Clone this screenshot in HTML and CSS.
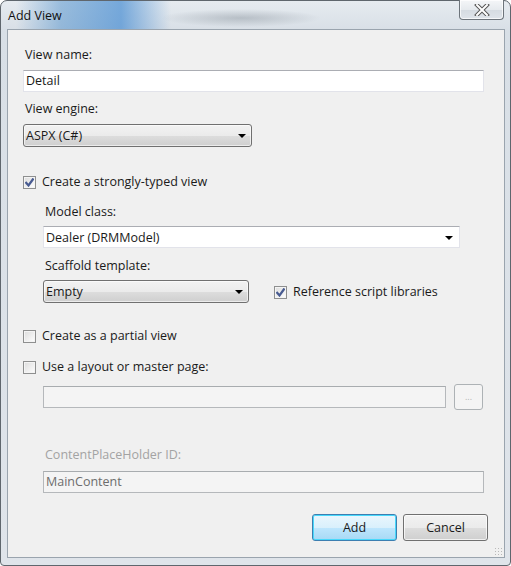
FILE: index.html
```html
<!DOCTYPE html>
<html lang="en">
<head>
    <meta charset="UTF-8">
    <title>Add View</title>
    <link rel="stylesheet" href="styles.css">
</head>
<body>
    <div class="window">
        <div class="titlebar">
            <div class="title">Add View</div>
            <div class="close-btn">
                <svg width="16" height="12" viewBox="0 0 16 12">
                    <path d="M3 1 L13 11 M13 1 L3 11" stroke="#555" stroke-width="4" stroke-linecap="square"/>
                    <path d="M3 1 L13 11 M13 1 L3 11" stroke="#fff" stroke-width="2" stroke-linecap="square"/>
                </svg>
            </div>
        </div>
        <div class="client">
            <div class="label l-name">View name:</div>
            <div class="textbox tb-name">Detail</div>

            <div class="label l-engine">View engine:</div>
            <div class="combo combo-engine">
                <span>ASPX (C#)</span>
                <span class="arrow"></span>
            </div>

            <div class="check-row cr-typed">
                <span class="check checked"></span>
                <span>Create a strongly-typed view</span>
            </div>

            <div class="indent">
                <div class="label l-model">Model class:</div>
                <div class="editcombo">
                    <span>Dealer (DRMModel)</span>
                    <span class="arrow"></span>
                </div>

                <div class="label l-scaffold">Scaffold template:</div>
                <div class="scaffold-row">
                    <div class="combo combo-scaffold">
                        <span>Empty</span>
                        <span class="arrow"></span>
                    </div>
                    <div class="check-row cr-ref">
                        <span class="check checked"></span>
                        <span>Reference script libraries</span>
                    </div>
                </div>
            </div>

            <div class="check-row cr-partial">
                <span class="check"></span>
                <span>Create as a partial view</span>
            </div>

            <div class="check-row cr-layout">
                <span class="check"></span>
                <span>Use a layout or master page:</span>
            </div>

            <div class="indent">
                <div class="master-row">
                    <div class="textbox disabled tb-master"></div>
                    <div class="browse-btn">...</div>
                </div>

                <div class="label disabled-text l-holder">ContentPlaceHolder ID:</div>
                <div class="textbox disabled tb-holder">MainContent</div>
            </div>

            <div class="buttons">
                <div class="btn btn-default">Add</div>
                <div class="btn">Cancel</div>
            </div>
            <div class="grip"></div>
        </div>
    </div>
</body>
</html>
```

FILE: styles.css
```css
* {
    box-sizing: border-box;
}
body {
    margin: 0;
    background-color: #fff;
    font-family: 'Open Sans', 'Noto Sans', sans-serif;
    font-size: 12.5px;
    color: #1a1a1a;
}
.window {
    width: 511px;
    height: 566px;
    border: 1px solid #5f666d;
    border-radius: 7px 7px 4px 4px;
    background:
        linear-gradient(to right, rgba(90, 150, 205, 0) 15px, rgba(90, 150, 205, 0.55) 60px, rgba(70, 140, 210, 0.7) 120px, rgba(70, 140, 210, 0) 170px) 0 0 / 100% 29px no-repeat,
        radial-gradient(ellipse 80px 9px at 240px 17px, rgba(110, 120, 130, 0.35), rgba(110, 120, 130, 0) 100%),
        linear-gradient(to bottom, #e6ebf0 0px, #d8dfe6 30px, #dfe4ea 100%);
    padding: 0 5px 7px 6px;
    display: flex;
    flex-direction: column;
    position: relative;
}
.titlebar {
    height: 28px;
    display: flex;
    justify-content: space-between;
    align-items: flex-start;
}
.title {
    padding: 7px 0 0 1px;
    line-height: 16px;
    color: #111;
}
.close-btn {
    width: 45px;
    height: 20px;
    margin-top: -1px;
    margin-right: 1px;
    border: 1px solid #6d747b;
    border-top: none;
    border-radius: 0 0 4px 4px;
    background: linear-gradient(to bottom, #f4f6f8 0%, #e6eaee 50%, #d5dbe1 51%, #dfe4ea 100%);
    box-shadow: inset 0 0 0 1px rgba(255, 255, 255, 0.7);
    display: flex;
    justify-content: center;
    align-items: center;
}
.client {
    flex-grow: 1;
    border: 1px solid #9aa4ae;
    background-color: #f0f0f0;
    padding: 17px 20px 0 15px;
    display: flex;
    flex-direction: column;
    position: relative;
}
.label {
    line-height: 16px;
    padding-left: 2px;
}
.l-engine { margin-top: 9px; }
.l-model { margin-top: 14px; }
.l-scaffold { margin-top: 10px; }
.l-holder { margin-top: 37px; }
.disabled-text {
    color: #a3a3a3;
}
.textbox {
    height: 22px;
    background-color: #fff;
    border: 1px solid #e2e3ea;
    border-top-color: #abadb3;
    line-height: 20px;
    padding-left: 2px;
}
.tb-name { margin-top: 7px; }
.textbox.disabled {
    background-color: #f4f4f4;
    border-color: #b5b8bb;
    border-top-color: #a8acaf;
    color: #6d6d6d;
}
.tb-holder { margin-top: 8px; }
.combo {
    height: 23px;
    border: 1px solid #707070;
    border-radius: 3px;
    background: linear-gradient(to bottom, #f2f2f2 0%, #ebebeb 50%, #dddddd 51%, #cfcfcf 100%);
    box-shadow: inset 0 0 0 1px rgba(255, 255, 255, 0.6);
    display: flex;
    justify-content: space-between;
    align-items: center;
    padding: 0 5px 0 2px;
}
.combo-engine {
    width: 229px;
    margin-top: 7px;
}
.combo-scaffold {
    width: 206px;
}
.arrow {
    width: 0;
    height: 0;
    border-left: 4px solid transparent;
    border-right: 4px solid transparent;
    border-top: 4px solid #000;
    margin-top: 1px;
}
.editcombo {
    margin-top: 6px;
    width: 417px;
    height: 22px;
    background-color: #fff;
    border: 1px solid #e2e3ea;
    border-top-color: #abadb3;
    display: flex;
    justify-content: space-between;
    align-items: center;
    padding: 0 6px 0 2px;
}
.check-row {
    display: flex;
    align-items: center;
    line-height: 16px;
    gap: 6px;
}
.cr-typed { margin-top: 27px; }
.cr-partial { margin-top: 25px; }
.cr-layout { margin-top: 15px; }
.check {
    width: 13px;
    height: 13px;
    border: 1px solid #8e8f8f;
    background: linear-gradient(135deg, #dcdcdc 0%, #f4f4f4 70%, #fff 100%);
    box-shadow: inset 0 0 0 1px #f4f4f4;
    flex-shrink: 0;
}
.check.checked {
    background:
        url("data:image/svg+xml,%3Csvg xmlns='http://www.w3.org/2000/svg' width='11' height='11' viewBox='0 0 11 11'%3E%3Cpath d='M1.5 5 L4.5 8.5 L9.5 1.5' fill='none' stroke='%23485b91' stroke-width='2.2'/%3E%3C/svg%3E") center / 11px 11px no-repeat,
        linear-gradient(135deg, #dcdcdc 0%, #f4f4f4 70%, #fff 100%);
}
.indent {
    padding-left: 20px;
    display: flex;
    flex-direction: column;
}
.scaffold-row {
    margin-top: 6px;
    display: flex;
    align-items: center;
    gap: 25px;
}
.cr-ref {
    margin-top: 1px;
}
.master-row {
    margin-top: 9px;
    height: 26px;
    display: flex;
    align-items: center;
    margin-right: 1px;
    gap: 8px;
}
.tb-master {
    flex-grow: 1;
}
.browse-btn {
    width: 29px;
    height: 26px;
    border: 1px solid #adb2b5;
    border-radius: 3px;
    background-color: #f4f4f4;
    color: #b5b5b5;
    font-size: 9px;
    text-align: center;
    line-height: 24px;
}
.buttons {
    margin-top: 21px;
    margin-right: -4px;
    display: flex;
    justify-content: flex-end;
    gap: 6px;
}
.btn {
    width: 85px;
    height: 27px;
    border: 1px solid #707070;
    border-radius: 3px;
    background: linear-gradient(to bottom, #f2f2f2 0%, #ebebeb 50%, #dddddd 51%, #cfcfcf 100%);
    box-shadow: inset 0 0 0 1px rgba(255, 255, 255, 0.7);
    text-align: center;
    line-height: 25px;
}
.btn-default {
    border-color: #3c7fb1;
    background: linear-gradient(to bottom, #eaf6fd 0%, #d9f0fc 50%, #bee6fd 51%, #a7d9f5 100%);
    box-shadow: inset 0 0 0 1px #48d8fb;
}
.grip {
    position: absolute;
    right: 2px;
    bottom: 2px;
    width: 8px;
    height: 8px;
    background-image: radial-gradient(circle, #b8b8b8 0.8px, transparent 1px);
    background-size: 3px 3px;
}
```
